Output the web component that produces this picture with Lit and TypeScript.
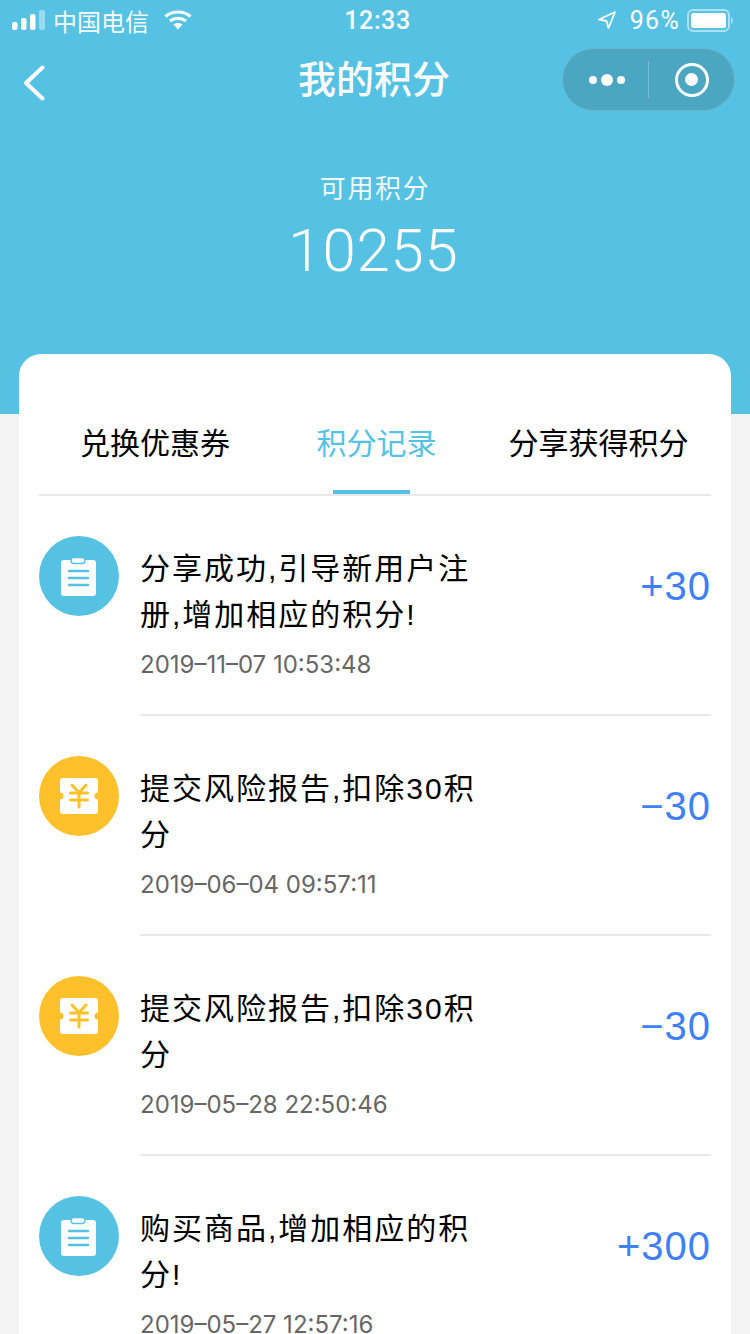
import { LitElement, html, css, svg } from "lit";
import { customElement } from "lit/decorators.js";

const clip = svg`<rect x="22" y="24" width="35" height="36" rx="3" fill="#fff"/>
  <rect x="32" y="21.500" width="14" height="6" rx="3" fill="#fff" stroke="#56c2e3" stroke-width="1.400"/>
  <path d="M30 35h19M30 42h19M30 49h19" stroke="#56c2e3" stroke-width="2.400" stroke-linecap="round"/>`;

const ticket = svg`<path d="M24 22h32a3 3 0 0 1 3 3v11.500a3.500 3.500 0 0 0 0 7V55a3 3 0 0 1-3 3H24a3 3 0 0 1-3-3V43.500a3.500 3.500 0 0 0 0-7V25a3 3 0 0 1 3-3z" fill="#fff"/>
  <path d="M33 29l7 7.500 7-7.500M31.500 37h17M31.500 44h17M40 37v14" fill="none" stroke="#fec02b" stroke-width="3" stroke-linecap="round" stroke-linejoin="round"/>`;

const rows = [
  { t: "分享成功,引导新用户注册,增加相应的积分!", d: "2019–11–07 10:53:48", v: "+30", k: "clip" },
  { t: "提交风险报告,扣除30积分", d: "2019–06–04 09:57:11", v: "−30", k: "ticket" },
  { t: "提交风险报告,扣除30积分", d: "2019–05–28 22:50:46", v: "−30", k: "ticket" },
  { t: "购买商品,增加相应的积分!", d: "2019–05–27 12:57:16", v: "+300", k: "clip" },
];

@customElement("app-root")
export class AppRoot extends LitElement {
  static styles = css`
    :host { display: block; width: 750px; height: 1334px; overflow: hidden; background: #f3f3f3; font-family: "Liberation Sans", "Noto Sans CJK SC", sans-serif; }
    .head { height: 414px; background: #56c2e3; color: #fff; display: flex; flex-direction: column; }
    .status { height: 40px; display: grid; grid-template-columns: 1fr auto 1fr; align-items: center; padding: 0 12px 0 17px; font-size: 24px; }
    .st-l { display: flex; align-items: center; margin-left: -5px; }
    .st-l svg.sig { margin-right: 8px; }
    .st-l svg.wifi { margin-left: 15px; }
    .carrier { opacity: .95; }
    .time { font-family: "Roboto", sans-serif; font-weight: 500; font-size: 25px; letter-spacing: .6px; }
    .st-r { display: flex; align-items: center; justify-content: flex-end; margin-right: 5px; }
    .pct { font-family: "Roboto", sans-serif; font-size: 25px; margin: 0 7px 0 14px; letter-spacing: 1.300px; }
    .nav { height: 85px; display: flex; align-items: center; justify-content: space-between; padding: 0 15px 4px 23px; position: relative; }
    .nav-title { position: absolute; left: 0; right: 2px; top: 15px; text-align: center; font-size: 38px; line-height: 50px; font-weight: 500; }
    .pill { width: 173px; height: 63px; box-sizing: border-box; border-radius: 32px; background: #4ba6c2; border: 1px solid #6db5cc; display: flex; align-items: center; margin-top: -6px; }
    .pill-a { width: 85px; display: flex; align-items: center; justify-content: center; gap: 4px; padding-left: 2px; box-sizing: border-box; }
    .dot { width: 8px; height: 8px; border-radius: 50%; background: #fff; }
    .dot.big { width: 12px; height: 12px; }
    .pill-sep { width: 1px; height: 37px; background: #7dbcd1; }
    .pill-b { flex: 1; display: flex; justify-content: center; }
    .ring { width: 34px; height: 34px; box-sizing: border-box; border: 3px solid #fff; border-radius: 50%; display: flex; align-items: center; justify-content: center; }
    .ring i { width: 13px; height: 13px; border-radius: 50%; background: #fff; }
    .sum { text-align: center; }
    .sum-l { font-size: 26px; line-height: 36px; margin-top: 42px; opacity: .92; letter-spacing: 1.600px; }
    .sum-v { font-family: "Roboto", sans-serif; font-weight: 300; font-size: 60px; line-height: 70px; margin-top: 9px; padding-right: 3px; letter-spacing: .8px; }
    .card { margin: -60px 19px 0; background: #fff; border-radius: 22px 22px 0 0; padding: 0 20px; height: 980px; }
    .tabs { height: 142px; box-sizing: border-box; display: grid; grid-template-columns: 232px 213px 227px; border-bottom: 2px solid #e9e9e9; }
    .tab { position: relative; text-align: center; font-size: 30px; line-height: 42px; padding-top: 69px; color: #000; }
    .tab:last-child { padding-left: 2px; }
    .tab.on { color: #56c2e3; padding-right: 2px; }
    .tab.on::after { content: ""; position: absolute; left: 62px; width: 77px; height: 4px; bottom: 0; background: #56c2e3; }
    .row { height: 220px; box-sizing: border-box; display: flex; padding-top: 40px; }
    .ico { width: 80px; height: 80px; flex: none; border-radius: 50%; margin-right: 21px; }
    .ico.clip { background: #56c2e3; }
    .ico.ticket { background: #fec02b; }
    .ico svg { display: block; }
    .body { flex: 1; display: flex; border-bottom: 2px solid #e8e8e8; justify-content: space-between; }
    .txt { width: 338px; }
    .ttl { font-size: 30px; line-height: 46px; color: #000; margin-top: 10px; letter-spacing: 2px; }
    .dt { font-family: "Inter", "Liberation Sans", sans-serif; font-size: 24px; line-height: 34px; color: #666; margin-top: 10px; }
    .val { font-size: 40px; line-height: 50px; color: #4080f5; margin-top: 25px; letter-spacing: 1px; }
  `;

  render() {
    return html`
      <div class="head">
        <div class="status">
          <div class="st-l">
            <svg class="sig" width="33" height="20" viewBox="0 0 33 20"><rect x="0" y="12" width="5.500" height="8" rx="2" fill="#fff"/><rect x="9" y="8" width="5.500" height="12" rx="2" fill="#fff"/><rect x="18" y="4" width="5.500" height="16" rx="2" fill="#fff"/><rect x="27" y="0" width="6" height="20" rx="2" fill="#fff" opacity=".4"/></svg>
            <span class="carrier">中国电信</span>
            <svg class="wifi" width="28" height="20" viewBox="0 0 28 20" fill="none" stroke="#fff" stroke-width="3.200"><path d="M1.500 6.500C8.500.5 19.500.5 26.500 6.500"/><path d="M6 11c4.500-3.500 11.500-3.500 16 0"/><path d="M14 19.500l-4.500-5c2.500-2 6.500-2 9 0z" fill="#fff" stroke="none"/></svg>
          </div>
          <div class="time">12:33</div>
          <div class="st-r">
            <svg width="18" height="18" viewBox="0 0 18 18" fill="none" stroke="#fff" stroke-width="1.800" stroke-linejoin="round"><path d="M17 1L1 8.500l7.500 1.500L10.500 17z"/></svg>
            <span class="pct">96%</span>
            <svg width="46" height="23" viewBox="0 0 46 23"><rect x="1" y="1" width="41" height="21" rx="5" fill="none" stroke="#fff" stroke-opacity=".5" stroke-width="2"/><rect x="4" y="4" width="35" height="15" rx="2.500" fill="#fff"/><path d="M44 8c1.500.5 2 2 2 3.500S45.500 14.500 44 15z" fill="#fff" fill-opacity=".5"/></svg>
          </div>
        </div>
        <div class="nav">
          <svg width="22" height="36" viewBox="0 0 22 36" fill="none" stroke="#fff" stroke-width="4" stroke-linecap="round" stroke-linejoin="round"><path d="M19.500 2.500L3 18l16.500 15.500"/></svg>
          <div class="nav-title">我的积分</div>
          <div class="pill">
            <div class="pill-a"><span class="dot"></span><span class="dot big"></span><span class="dot"></span></div>
            <div class="pill-sep"></div>
            <div class="pill-b"><div class="ring"><i></i></div></div>
          </div>
        </div>
        <div class="sum">
          <div class="sum-l">可用积分</div>
          <div class="sum-v">10255</div>
        </div>
      </div>
      <div class="card">
        <div class="tabs">
          <div class="tab">兑换优惠券</div>
          <div class="tab on">积分记录</div>
          <div class="tab">分享获得积分</div>
        </div>
        ${rows.map(
          (r) => html`<div class="row">
            <div class="ico ${r.k}"><svg width="80" height="80" viewBox="0 0 80 80">${r.k === "clip" ? clip : ticket}</svg></div>
            <div class="body">
              <div class="txt"><div class="ttl">${r.t}</div><div class="dt">${r.d}</div></div>
              <div class="val">${r.v}</div>
            </div>
          </div>`
        )}
      </div>
    `;
  }
}
